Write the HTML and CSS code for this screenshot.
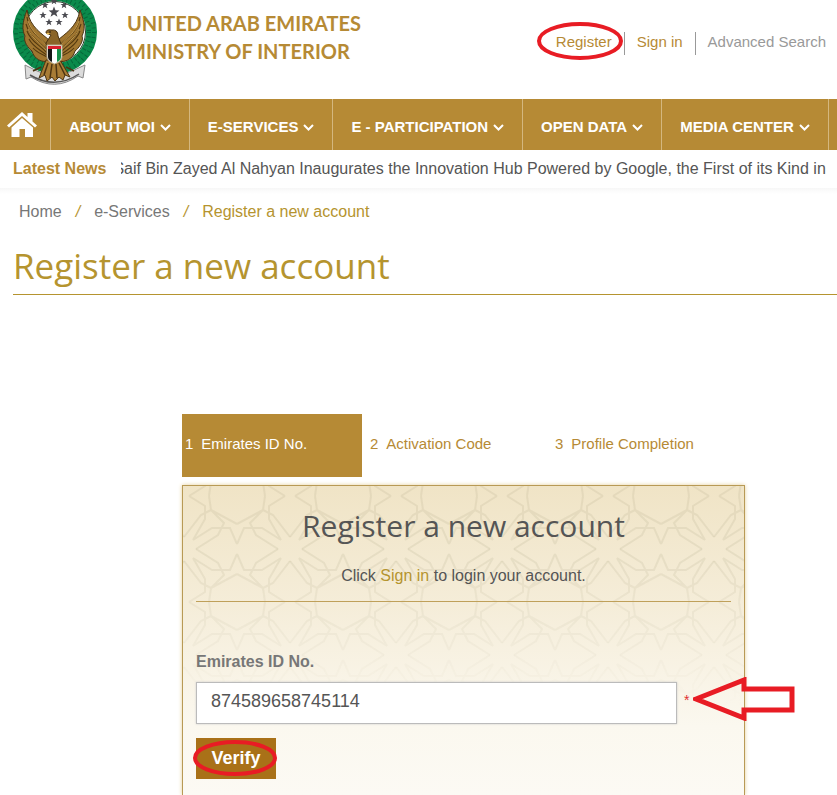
FILE: index.html
```html
<!DOCTYPE html>
<html lang="en">
<head>
<meta charset="utf-8">
<title>Register a new account</title>
<link rel="stylesheet" href="styles.css">
</head>
<body>
<header class="header">
  <a class="brand" href="#">
    <svg class="emblem" viewBox="0 0 86 87" aria-hidden="true">
      <defs>
        <path id="star" d="M0-3.6 1-1.1 3.6-1 1.5.6 2.3 3.2 0 1.7-2.3 3.2-1.5.6-3.6-1-1-1.1Z"/>
        <g id="wing">
          <path d="M38 41C31 34 18 28 15 10C10 23 10 30 13 36C11 41 16 48 20 51C22 59 30 63 37 61Z" fill="#a07630" stroke="#4b3515"/>
          <path d="M15 17C17 31 26 36 34 44M14 24C17 36 25 40 34 49M15 31C19 42 27 44 35 53M17 39C21 47 27 49 36 56M21 48C25 53 31 54 37 58" fill="none" stroke="#53390f" stroke-width="1.1"/>
          <path d="M16 21C20 33 28 37 35 46M16 29C20 39 28 42 35 51" fill="none" stroke="#d5ac5c" stroke-width=".8"/>
        </g>
      </defs>
      <circle cx="43" cy="32" r="36.500" fill="#fff" stroke="#0a8a4b" stroke-width="11"/>
      <circle cx="43" cy="32" r="39" fill="none" stroke="#06683a" stroke-width="4" stroke-dasharray="1 4"/>
      <circle cx="43" cy="32" r="34" fill="none" stroke="#06683a" stroke-width="4" stroke-dasharray="1 3.400"/>
      <circle cx="43" cy="32" r="30.500" fill="none" stroke="#263e29" stroke-width="1"/>
      <g fill="#4a4a50">
        <use href="#star" transform="translate(42 12) scale(1.5)"/>
        <use href="#star" x="42" y="1"/><use href="#star" x="33" y="5"/><use href="#star" x="52" y="5"/>
        <use href="#star" x="31" y="15"/><use href="#star" x="53" y="15"/>
        <use href="#star" x="37" y="22"/><use href="#star" x="47" y="22"/>
      </g>
      <path d="M13 65 25 71Q43 80 60 71L73 65 71 78 66 76Q43 92 19 77L14 79Z" fill="#dcdcdc" stroke="#888"/>
      <path d="M18 75Q43 90 67 74" fill="none" stroke="#555" stroke-width="1.500"/>
      <use href="#wing"/><use href="#wing" transform="matrix(-1 0 0 1 83 0)"/>
      <path d="M34 33Q34 29 39 30Q46 29 46 36L49 44 47 63 36 63 34 43 39 35Z" fill="#8a6428" stroke="#48310f"/>
      <path d="M34 33 38 33 36 35Z" fill="#e6bb56"/>
      <circle cx="38" cy="32" r=".8" fill="#111"/>
      <path d="M34 60 27 78 33 75 35 81 40 77 43 81 47 77 51 80 53 75 58 77 48 60Z" fill="#a97d36" stroke="#4d3512"/>
      <path d="M36 63 32 75M40 64 38 78M44 64 45 78M47 63 53 75M29 67 21 71M54 67 62 71" fill="none" stroke="#4d3512" stroke-width="1.500"/>
      <path d="M35 45H50V57Q50 61 42.500 64Q35 61 35 57Z" fill="#fff" stroke="#b5a78a"/>
      <path d="M36 46H49V49H36Z" fill="#d8202e"/>
      <path d="M36 49H40V62Q36 60 36 57Z" fill="#161616"/>
      <path d="M45 49H49V57Q49 60 45 62Z" fill="#159049"/>
    </svg>
    <span class="brand-name">UNITED ARAB EMIRATES<br>MINISTRY OF INTERIOR</span>
  </a>
  <nav class="account" aria-label="Account">
    <a class="marked" href="#">Register<svg class="ring" viewBox="0 0 86 38" aria-hidden="true"><ellipse cx="43" cy="19" rx="41" ry="17"/></svg></a>
    <a href="#">Sign in</a>
    <a class="muted" href="#">Advanced Search</a>
  </nav>
</header>
<nav class="menu" aria-label="Main">
  <a class="home" href="#" aria-label="Home"><svg viewBox="0 0 30 26" aria-hidden="true"><path d="M15 0 20.500 5V1H25.500V9.500L30 13.500 28 15.500 15 4 2 15.500 0 13.500Z"/><path d="M15 6 26 15.500V25H18V17H12.500V25H4.500V15.500Z"/></svg></a>
  <a href="#">ABOUT MOI<svg class="chevron" viewBox="0 0 11 7" aria-hidden="true"><path d="M1 1 5.500 5.500 10 1"/></svg></a>
  <a href="#">E-SERVICES<svg class="chevron" viewBox="0 0 11 7" aria-hidden="true"><path d="M1 1 5.500 5.500 10 1"/></svg></a>
  <a href="#">E - PARTICIPATION<svg class="chevron" viewBox="0 0 11 7" aria-hidden="true"><path d="M1 1 5.500 5.500 10 1"/></svg></a>
  <a href="#">OPEN DATA<svg class="chevron" viewBox="0 0 11 7" aria-hidden="true"><path d="M1 1 5.500 5.500 10 1"/></svg></a>
  <a href="#">MEDIA CENTER<svg class="chevron" viewBox="0 0 11 7" aria-hidden="true"><path d="M1 1 5.500 5.500 10 1"/></svg></a>
</nav>
<section class="news">
  <strong>Latest News</strong>
  <div class="ticker"><span>Saif Bin Zayed Al Nahyan Inaugurates the Innovation Hub Powered by Google, the First of its Kind in</span></div>
</section>
<main class="main">
  <nav class="crumbs" aria-label="Breadcrumb">
    <a href="#">Home</a><i>/</i><a href="#">e-Services</a><i>/</i><span>Register a new account</span>
  </nav>
  <h1>Register a new account</h1>
  <div class="wizard">
    <ol class="steps">
      <li class="active"><span>1</span>Emirates ID No.</li>
      <li><span>2</span>Activation Code</li>
      <li><span>3</span>Profile Completion</li>
    </ol>
    <form class="panel">
      <svg class="lattice" aria-hidden="true">
        <defs>
          <path id="quarter" d="M-53-25-27-39-25-53M-27-39-40-26-34-14-12 0M-27-39-17-34 0-12M-53-5-46-21H-28L-9-9M-5-53-21-43V-30L-9-9"/>
          <pattern id="tile" x="-52" y="10" width="106" height="106" patternUnits="userSpaceOnUse">
            <g class="lines" transform="translate(53 53)"><use href="#quarter"/><use href="#quarter" transform="scale(-1 1)"/><use href="#quarter" transform="scale(1 -1)"/><use href="#quarter" transform="scale(-1 -1)"/></g>
          </pattern>
        </defs>
        <rect width="100%" height="100%" fill="url(#tile)"/>
      </svg>
      <div class="intro">
        <h2>Register a new account</h2>
        <p>Click <a href="#">Sign in</a> to login your account.</p>
      </div>
      <label for="eid">Emirates ID No.</label>
      <div class="field">
        <input id="eid" type="text" value="874589658745114">
        <span class="required">*<svg class="arrow" viewBox="0 0 102 44" aria-hidden="true"><path d="M3 22 51 3V12H99V33H51V41Z"/></svg></span>
      </div>
      <button class="marked" type="button">Verify<svg class="ring" viewBox="0 0 84 38" aria-hidden="true"><ellipse cx="42" cy="19" rx="40" ry="16"/></svg></button>
    </form>
  </div>
</main>
</body>
</html>
```
FILE: styles.css
```css
* { box-sizing: border-box; }
body {
  margin: 0;
  min-height: 100vh;
  display: flex;
  flex-direction: column;
  overflow-x: hidden;
  background: #fff;
  color: #555;
  font: 16px/20px "Liberation Sans", Arial, sans-serif;
}
a { color: inherit; text-decoration: none; }
.header {
  height: 99px;
  display: flex;
  justify-content: space-between;
  padding: 0 11px 0 12px;
}
.brand { display: flex; gap: 29px; color: #b68a35; }
.emblem { width: 86px; height: 87px; }
.brand-name { padding-top: 9px; font: 700 20px/28px Lato, sans-serif; white-space: nowrap; }
.account { display: flex; padding-top: 32px; color: #b68a35; font-size: 15px; white-space: nowrap; }
.account a { height: 23px; padding: 0 12px; border-left: 1px solid #999; }
.account a:first-child { border-left: 0; }
.account a:last-child { padding-right: 0; }
.account .muted { color: #999; }
.marked { position: relative; }
.ring { position: absolute; overflow: visible; fill: none; stroke: #e81c24; stroke-width: 4px; }
.account .ring { left: -7px; top: -10px; width: 86px; height: 38px; }
.menu {
  height: 51px;
  display: flex;
  background: #b68a35;
  color: #fff;
  font-size: 15px;
  font-weight: 700;
  white-space: nowrap;
}
.menu a {
  display: flex;
  align-items: center;
  gap: 5px;
  padding: 4px 18px 0;
  border-right: 1px solid #d4b77f;
}
.menu .home { padding: 0 13px 0 7px; }
.home svg { width: 30px; height: 26px; fill: #fff; }
.chevron { width: 11px; height: 7px; margin-top: 2px; fill: none; stroke: #fff; stroke-width: 2px; }
.news {
  height: 38px;
  display: flex;
  align-items: center;
  gap: 15px;
  padding-left: 13px;
  white-space: nowrap;
}
.news strong { color: #b68a35; }
.ticker { flex: 1; overflow: hidden; }
.ticker span { display: inline-block; margin-left: -8px; }
.main {
  flex: 1;
  display: flex;
  flex-direction: column;
  padding-left: 13px;
  background: linear-gradient(#f7f7f7, #fff 6px);
}
.crumbs { display: flex; gap: 12px; padding: 14px 6px 0; color: #777; }
.crumbs i, .crumbs span { color: #b5942f; }
.crumbs i { padding: 0 2px; }
h1 {
  margin: 17px 0 0;
  padding-bottom: 1px;
  border-bottom: 1px solid #b5942f;
  color: #b5942f;
  font: 400 35px/54px "Open Sans", sans-serif;
}
.wizard {
  flex: 1;
  display: flex;
  flex-direction: column;
  max-width: 732px;
  margin-top: 119px;
  padding-left: 169px;
}
.steps {
  display: grid;
  grid-template-columns: 180px 180px 1fr;
  gap: 5px;
  margin: 0 0 8px;
  padding: 0;
  list-style: none;
  color: #b68a35;
  font-size: 15px;
  line-height: 60px;
}
.steps li { height: 63px; padding-left: 3px; }
.steps span { margin-right: 8px; }
.steps .active { background: #b68a35; color: #fff; }
.panel {
  position: relative;
  flex: 1;
  padding: 0 13px 16px;
  border: 1px solid #b89a55;
  border-bottom: 0;
  background: linear-gradient(#f0e4c6, #f5edd9 120px, #fbf8ef 240px, #fcfaf4);
  box-shadow: 0 0 4px #e5cf98;
}
.lattice {
  position: absolute;
  inset: 0;
  width: 100%;
  height: 240px;
  mask-image: linear-gradient(#000 30%, transparent 92%);
}
.lines { fill: none; stroke: #a09470; stroke-opacity: .14; stroke-width: 2px; }
.intro { position: relative; height: 116px; padding-top: 16px; border-bottom: 1px solid #bfa05a; text-align: center; }
h2 { margin: 0; color: #555; font: 400 30px/48px "Open Sans", sans-serif; }
p { margin: 16px 0 0; }
p a { color: #b5942f; }
label { position: relative; display: block; margin: 50px 0 10px; color: #777; font-weight: 700; }
.field { position: relative; display: flex; gap: 7px; }
input {
  width: 481px;
  min-width: 0;
  height: 42px;
  padding: 0 14px 4px;
  border: 1px solid #bbb;
  background: #fff;
  color: #555;
  font: 18px "Liberation Sans", Arial, sans-serif;
  box-shadow: 0 0 2px #ccc;
}
.required { position: relative; padding-top: 8px; color: #e03030; font-size: 14px; }
.arrow { position: absolute; left: 9px; top: -5px; width: 102px; height: 44px; fill: none; stroke: #e81c24; stroke-width: 5px; }
button {
  display: block;
  width: 80px;
  height: 41px;
  margin-top: 14px;
  padding: 0;
  border: 0;
  background: #a97118;
  color: #fff;
  font: 700 18px "Liberation Sans", Arial, sans-serif;
}
button .ring { left: -3px; top: 1px; width: 84px; height: 38px; }
```
